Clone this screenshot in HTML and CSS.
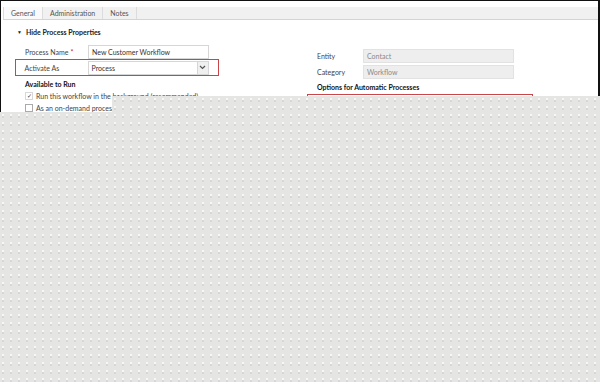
FILE: index.html
```html
<!DOCTYPE html>
<html lang="en">
<head>
    <meta charset="UTF-8">
    <meta name="viewport" content="width=device-width, initial-scale=1.0">
    <title>Process Properties</title>
    <link rel="stylesheet" href="styles.css">
</head>
<body>
    <div class="frame">
        <div class="tabs">
            <span class="tab active">General</span>
            <span class="tab">Administration</span>
            <span class="tab">Notes</span>
        </div>

        <div class="section-head"><span class="arrow">&#9660;</span>Hide Process Properties</div>

        <div class="cols">
            <div class="col left">
                <div class="row">
                    <label>Process Name<span class="req">*</span></label>
                    <div class="input">New Customer Workflow</div>
                </div>
                <div class="row highlight">
                    <label>Activate As</label>
                    <div class="input select">
                        <span>Process</span>
                        <span class="drop">
                            <svg width="7" height="5" viewBox="0 0 7 5"><path d="M1 1 L3.5 3.5 L6 1" fill="none" stroke="#555" stroke-width="1.2"/></svg>
                        </span>
                    </div>
                </div>
                <h4>Available to Run</h4>
                <div class="check"><span class="box checked">&#10003;</span>Run this workflow in the background (recommended)</div>
                <div class="check"><span class="box"></span>As an on-demand process</div>
            </div>

            <div class="col right">
                <div class="row">
                    <label>Entity</label>
                    <div class="input disabled">Contact</div>
                </div>
                <div class="row">
                    <label>Category</label>
                    <div class="input disabled">Workflow</div>
                </div>
                <h4>Options for Automatic Processes</h4>
                <div class="auto-box"></div>
            </div>
        </div>
    </div>

    <!-- image still loading: placeholder covers the lower part -->
    <div class="loading loading-top"></div>
    <div class="loading loading-bottom"></div>
</body>
</html>
```

FILE: styles.css
```css
body {
    position: relative;
    margin: 0;
    font-family: Lato, 'Open Sans', sans-serif;
    font-size: 7px;
    color: #333;
    background: #fff;
}
.frame {
    width: 600px;
    height: 382px;
    box-sizing: border-box;
    border: 1px solid #111;
    border-right-width: 2px;
    padding: 6px 0 0 2px;
    overflow: hidden;
}
.tabs {
    display: flex;
    height: 12px;
    background-color: #f1f1f1;
    border-bottom: 1px solid #d4d4d4;
}
.tab {
    padding: 0 7px;
    line-height: 12px;
    color: #555;
    border-right: 1px solid #dcdcdc;
}
.tab.active {
    background-color: #fafafa;
    border-left: 1px solid #dcdcdc;
}
.section-head {
    margin: 7px 0 0 14px;
    font-weight: bold;
    color: #222;
    line-height: 10px;
}
.arrow {
    font-size: 5px;
    display: inline-block;
    width: 9px;
    vertical-align: 1px;
}
.cols {
    display: flex;
    margin-top: 7px;
}
.col.left {
    width: 205px;
    padding-left: 12px;
}
.col.right {
    padding: 4px 0 0 97px;
}
.row {
    display: flex;
    align-items: center;
    height: 15px;
}
.row label {
    width: 63px;
    padding-left: 10px;
    color: #444;
}
.req {
    color: #d01818;
    margin-left: 2px;
}
.input {
    width: 116px;
    height: 12px;
    border: 1px solid #d6d6d6;
    padding-left: 3px;
    line-height: 12px;
    background: #fff;
}
.row.highlight {
    height: 17px;
    border: 1.5px solid #c8464a;
    margin: 0;
    width: 204px;
    box-sizing: border-box;
}
.row.highlight label {
    padding-left: 8.5px;
}
.select {
    display: flex;
    justify-content: space-between;
}
.drop {
    width: 10px;
    border-left: 1px solid #d6d6d6;
    background: #f0f0f0;
    display: flex;
    align-items: center;
    justify-content: center;
}
h4 {
    margin: 4px 0 2px 10px;
    font-size: 7px;
    color: #111;
}
.check {
    display: flex;
    align-items: center;
    height: 12px;
    padding-left: 10px;
    color: #444;
    white-space: nowrap;
}
.box {
    width: 6px;
    height: 6px;
    border: 1px solid #aaa;
    margin-right: 3px;
    font-size: 6px;
    line-height: 6px;
    text-align: center;
    color: #333;
}
.box.checked {
    border-color: #d8d8d8;
}
.right .row label {
    width: 46px;
    padding-left: 0;
}
.right .row {
    height: 16px;
}
.input.disabled {
    width: 146px;
    background-color: #eeeeee;
    border-color: #e2e2e2;
    color: #8a8a8a;
}
.right h4 {
    margin: 3px 0 3px 0;
}
.auto-box {
    margin-left: -10px;
    width: 224px;
    height: 30px;
    border: 1.5px solid #c8464a;
}
.loading {
    position: absolute;
    right: 0;
    bottom: 0;
    background-color: #e5e6e4;
    background-image:
        radial-gradient(circle at 3px 3px, #f7f7f7 0.8px, transparent 1.3px),
        radial-gradient(circle at 3px 5px, #d2d3d1 0.6px, transparent 1px);
    background-size: 8px 8px;
}
.loading-top {
    left: 112px;
    top: 96px;
}
.loading-bottom {
    left: 0;
    top: 112px;
}
```
